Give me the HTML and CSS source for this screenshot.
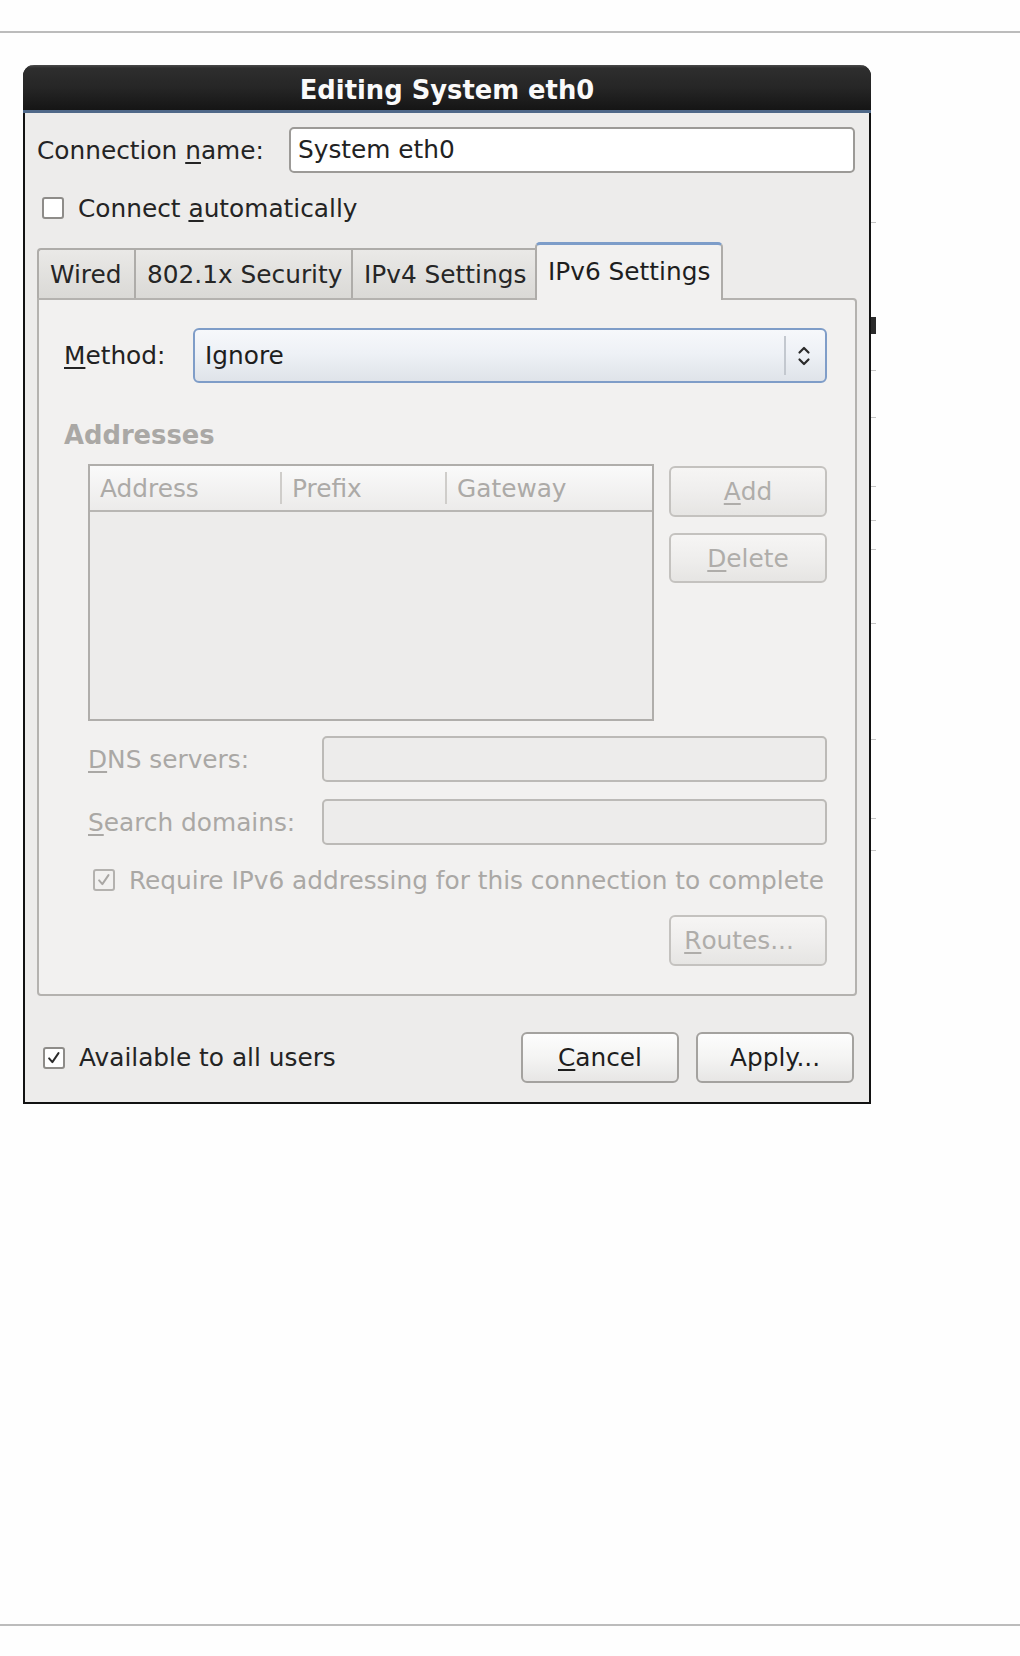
FILE: index.html
```html
<!DOCTYPE html>
<html>
<head>
<meta charset="utf-8">
<link rel="stylesheet" href="styles.css">
</head>
<body>
<div class="rule rule-top"></div>
<div class="behind">
  <span class="bw-block"></span>
  <span class="bw-line l1"></span>
  <span class="bw-line l2"></span>
  <span class="bw-line l3"></span>
  <span class="bw-line l4"></span>
  <span class="bw-line l5"></span>
  <span class="bw-line l6"></span>
  <span class="bw-line l7"></span>
  <span class="bw-line l8"></span>
  <span class="bw-line l9"></span>
  <span class="bw-line l10"></span>
</div>
<div class="stage">
  <div class="dialog">
    <div class="titlebar">Editing System eth0</div>
    <div class="dbody">
      <div class="name-row">
        <span class="label">Connection <u>n</u>ame:</span>
        <div class="entry">System eth0</div>
      </div>
      <div class="auto-row">
        <span class="check"></span>
        <span class="label">Connect <u>a</u>utomatically</span>
      </div>
      <div class="tabs">
        <div class="tab tab-wired">Wired</div>
        <div class="tab tab-sec">802.1x Security</div>
        <div class="tab tab-v4">IPv4 Settings</div>
        <div class="tab tab-v6 active">IPv6 Settings</div>
      </div>
      <div class="panel">
        <div class="method-row">
          <span class="label method-label"><u>M</u>ethod:</span>
          <div class="combo">
            <span class="combo-text">Ignore</span>
            <span class="combo-sep"></span>
            <svg class="combo-arrows" width="14" height="24" viewBox="0 0 14 24">
              <path d="M2.5 8.5 L7 4 L11.5 8.5" fill="none" stroke="#2a2a2a" stroke-width="2.2" stroke-linecap="round" stroke-linejoin="round"/>
              <path d="M2.5 15.5 L7 20 L11.5 15.5" fill="none" stroke="#2a2a2a" stroke-width="2.2" stroke-linecap="round" stroke-linejoin="round"/>
            </svg>
          </div>
        </div>
        <div class="section-title">Addresses</div>
        <div class="addr-area">
          <div class="table">
            <div class="thead">
              <div class="th th-addr">Address</div>
              <div class="th th-prefix">Prefix</div>
              <div class="th th-gw">Gateway</div>
            </div>
            <div class="tbody"></div>
          </div>
          <div class="side-buttons">
            <div class="btn disabled"><u>A</u>dd</div>
            <div class="btn disabled"><u>D</u>elete</div>
          </div>
        </div>
        <div class="field-row dns-row">
          <span class="dlabel"><u>D</u>NS servers:</span>
          <div class="entry disabled-entry"></div>
        </div>
        <div class="field-row search-row">
          <span class="dlabel"><u>S</u>earch domains:</span>
          <div class="entry disabled-entry"></div>
        </div>
        <div class="require-row">
          <span class="check dis-check">
            <svg width="22" height="22" viewBox="0 0 22 22"><path d="M5 11.5 L9 16 L16.5 5" fill="none" stroke="#a9a7a4" stroke-width="2.4" stroke-linecap="round" stroke-linejoin="round"/></svg>
          </span>
          <span class="dlabel">Require IPv6 addressing for this connection to complete</span>
        </div>
        <div class="routes-row">
          <div class="btn disabled routes"><u>R</u>outes...</div>
        </div>
      </div>
      <div class="footer">
        <span class="check on-check">
          <svg width="22" height="22" viewBox="0 0 22 22"><path d="M5 11.5 L9 16 L16.5 5" fill="none" stroke="#2a2a2a" stroke-width="2.4" stroke-linecap="round" stroke-linejoin="round"/></svg>
        </span>
        <span class="label avail">Available to all users</span>
        <div class="footer-buttons">
          <div class="btn"><u>C</u>ancel</div>
          <div class="btn">Apply...</div>
        </div>
      </div>
    </div>
  </div>
</div>
<div class="rule rule-bottom"></div>
</body>
</html>
```

FILE: styles.css
```css
html, body {
  margin: 0;
  padding: 0;
  background: #fefefe;
}
body {
  font-family: "DejaVu Sans", "Liberation Sans", sans-serif;
  font-size: 24.8px;
  color: #242424;
  width: 1020px;
  height: 1656px;
  overflow: hidden;
  position: relative;
}
u {
  text-decoration-thickness: 2px;
  text-underline-offset: 3px;
}
.rule {
  height: 2px;
  background: #bcbcbc;
}
.rule-top {
  margin-top: 31px;
}
.rule-bottom {
  margin-top: 520px;
}

/* sliver of a window lying behind the dialog */
.behind {
  position: absolute;
  left: 870px;
  top: 200px;
  width: 8px;
  height: 680px;
}
.bw-block {
  position: absolute;
  left: 0;
  top: 117px;
  width: 6px;
  height: 17px;
  background: #2a2a2a;
}
.bw-line {
  position: absolute;
  left: 0;
  width: 6px;
  height: 1px;
  background: #c4c4c4;
}
.l1 { top: 22px; }
.l2 { top: 170px; }
.l3 { top: 217px; }
.l4 { top: 286px; }
.l5 { top: 320px; }
.l6 { top: 349px; }
.l7 { top: 423px; }
.l8 { top: 539px; }
.l9 { top: 618px; }
.l10 { top: 650px; }

.stage {
  padding-top: 32px;
  padding-left: 23px;
  position: relative;
  z-index: 1;
}
.dialog {
  width: 848px;
  box-sizing: border-box;
  border: 2px solid #121212;
  border-top: none;
  border-radius: 11px 11px 0 0;
  background: #edeceb;
}
.titlebar {
  box-sizing: border-box;
  height: 48px;
  padding-top: 6px;
  line-height: 39px;
  margin: 0 -2px;
  border-radius: 11px 11px 0 0;
  background: linear-gradient(#4a4a4a 0px, #2e2e2e 3px, #262626 50%, #151515 100%);
  border-bottom: 3px solid #4f6888;
  color: #fafafa;
  font-weight: bold;
  font-size: 25.8px;
  text-align: center;
}
.dbody {
  padding: 0 12px 19px 12px;
}
.label {
  white-space: nowrap;
}
.name-row {
  margin-top: 14px;
  height: 46px;
  display: flex;
  align-items: center;
}
.entry {
  box-sizing: border-box;
  height: 46px;
  background: #fff;
  border: 2px solid #9c9a97;
  border-radius: 5px;
  padding-left: 7px;
  line-height: 42px;
  color: #222;
}
.name-row .entry {
  margin-left: auto;
  margin-right: 2px;
  width: 566px;
}
.auto-row {
  margin-top: 21px;
  height: 28px;
  display: flex;
  align-items: center;
}
.check {
  box-sizing: border-box;
  width: 22px;
  height: 22px;
  border: 2px solid #8e8c89;
  border-radius: 3px;
  background: #fff;
  display: flex;
  align-items: center;
  justify-content: center;
  flex: none;
}
.check svg {
  display: block;
}
.auto-row .check {
  margin-left: 5px;
  margin-right: 14px;
}
.tabs {
  margin-top: 20px;
  height: 56px;
  display: flex;
  align-items: flex-end;
}
.tab {
  box-sizing: border-box;
  height: 50px;
  padding-left: 11px;
  padding-top: 2px;
  line-height: 46px;
  background: linear-gradient(#eae9e7, #dad9d6);
  border: 2px solid #aeaca9;
  border-bottom: none;
  border-right: none;
  white-space: nowrap;
  color: #262626;
}
.tab-wired {
  width: 97px;
  border-radius: 4px 0 0 0;
}
.tab-sec {
  width: 217px;
}
.tab-v4 {
  width: 184px;
}
.tab-v6 {
  width: 188px;
}
.tab.active {
  height: 58px;
  background: #f2f1f0;
  border: 2px solid #aeaca9;
  border-top: 3px solid #7d9dc9;
  border-bottom: none;
  border-radius: 5px 5px 0 0;
  padding-top: 4px;
  line-height: 46px;
  padding-left: 11px;
  margin-bottom: -2px;
  position: relative;
  z-index: 1;
  color: #1e1e1e;
}
.panel {
  box-sizing: border-box;
  height: 698px;
  background: #f2f1f0;
  border: 2px solid #b4b2af;
  border-radius: 0 4px 4px 4px;
  padding: 28px 28px 0 25px;
}
.method-row {
  height: 55px;
  display: flex;
  align-items: center;
}
.method-label {
  color: #222;
}
.combo {
  margin-left: auto;
  width: 634px;
  height: 55px;
  box-sizing: border-box;
  border: 2px solid #7f9dc8;
  border-radius: 6px;
  background: linear-gradient(#f6f8fb 0%, #eef1f6 45%, #dfe3e9 100%);
  display: flex;
  align-items: center;
  padding-left: 10px;
}
.combo-text {
  flex: 1;
  color: #1e1e1e;
}
.combo-sep {
  width: 2px;
  height: 39px;
  background: #c3c8cf;
  margin-right: 11px;
}
.combo-arrows {
  margin-right: 14px;
  display: block;
}
.section-title {
  margin-top: 37px;
  height: 30px;
  line-height: 30px;
  font-weight: bold;
  font-size: 25.8px;
  color: #aaa8a5;
}
.addr-area {
  margin-top: 14px;
  padding-left: 24px;
  display: flex;
  height: 257px;
}
.table {
  width: 567px;
  height: 257px;
  box-sizing: border-box;
  border: 2px solid #b0aeab;
  background: #edeceb;
  display: flex;
  flex-direction: column;
}
.thead {
  height: 46px;
  box-sizing: border-box;
  border-bottom: 2px solid #b8b6b3;
  background: linear-gradient(#fafafa, #ecebea);
  display: flex;
  align-items: center;
}
.th {
  box-sizing: border-box;
  height: 32px;
  line-height: 34px;
  padding-left: 10px;
  color: #acaaa7;
  white-space: nowrap;
}
.th-addr {
  width: 190px;
}
.th-prefix {
  width: 165px;
  border-left: 2px solid #cfcdca;
}
.th-gw {
  flex: 1;
  border-left: 2px solid #cfcdca;
}
.side-buttons {
  margin-left: 15px;
  margin-top: 2px;
  display: flex;
  flex-direction: column;
  gap: 16px;
}
.btn {
  box-sizing: border-box;
  width: 158px;
  height: 51px;
  border: 2px solid #a4a29f;
  border-radius: 6px;
  background: linear-gradient(#fdfdfd 0%, #f4f4f3 50%, #e7e6e5 100%);
  display: flex;
  align-items: center;
  justify-content: center;
  color: #1e1e1e;
  white-space: nowrap;
}
.btn.disabled {
  border-color: #c4c2bf;
  background: linear-gradient(#f6f5f4 0%, #efeeed 50%, #e6e5e3 100%);
  color: #afadaa;
}
.btn.routes {
  padding-right: 18px;
}
.side-buttons .btn:nth-child(2) {
  height: 50px;
}
.field-row {
  height: 46px;
  padding-left: 24px;
  display: flex;
  align-items: center;
}
.dns-row {
  margin-top: 15px;
}
.search-row {
  margin-top: 17px;
}
.dlabel {
  color: #aaa8a5;
  white-space: nowrap;
}
.disabled-entry {
  margin-left: auto;
  width: 505px;
  background: #edeceb;
  border-color: #bcbab7;
}
.require-row {
  margin-top: 17px;
  height: 36px;
  display: flex;
  align-items: center;
  padding-left: 29px;
}
.dis-check {
  border-color: #b4b2af;
  background: #f2f1f0;
  margin-right: 14px;
}
.routes-row {
  margin-top: 17px;
  display: flex;
  justify-content: flex-end;
}
.footer {
  margin-top: 36px;
  height: 51px;
  display: flex;
  align-items: center;
  padding-left: 6px;
  padding-right: 3px;
}
.on-check {
  margin-right: 14px;
}
.footer-buttons {
  margin-left: auto;
  display: flex;
  gap: 17px;
}
```
